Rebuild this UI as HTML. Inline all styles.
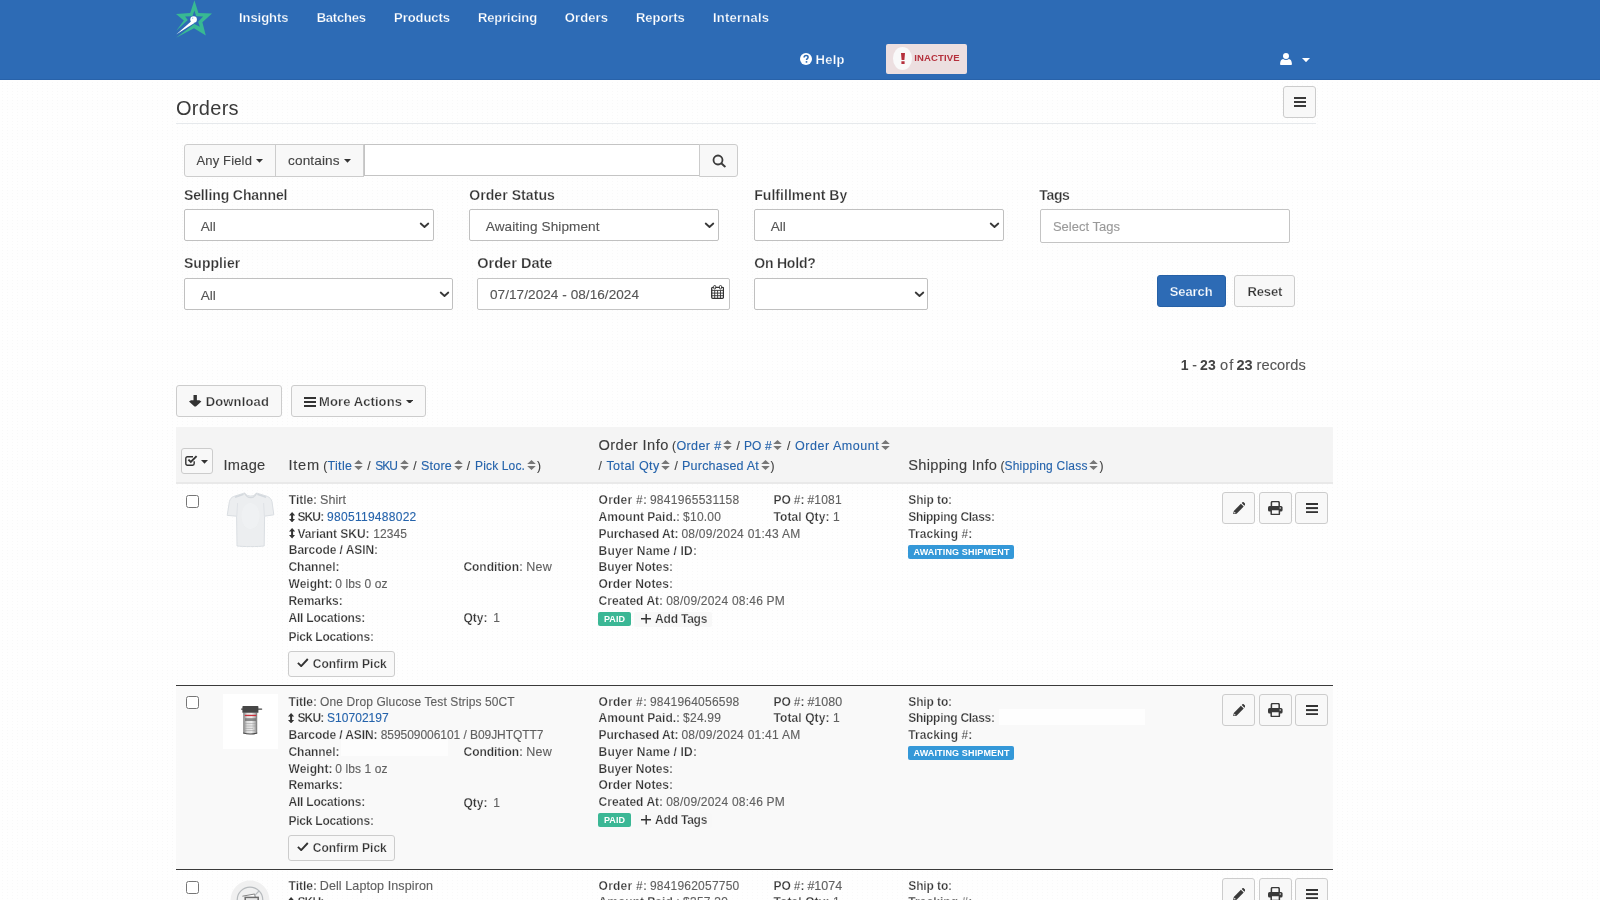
<!DOCTYPE html>
<html lang="en">
<head>
<meta charset="utf-8">
<title>Orders</title>
<style>
html,body{margin:0;padding:0}
body{width:1600px;height:900px;overflow:hidden;position:relative;background:#fefefe radial-gradient(circle,#f8f8f8 0.5px,rgba(248,248,248,0) 0.7px) 0 0/5px 3px;font-family:"Liberation Sans",sans-serif;}
div,span,svg,header,nav,main,section{position:absolute;box-sizing:border-box}
.t{white-space:pre}
.btn{background:#f8f8f8;border:1px solid #ccc;border-radius:3px}
.inp{background:#fff;border:1px solid #c4c4c4;border-radius:2px}
.sel{background:#fff;border:1px solid #c0c0c0;border-radius:2px}
#app{left:0;top:0;width:1600px;height:900px;will-change:transform}

</style>
</head>
<body>
<div id="app">
<header style="left:0;top:0;width:1600px;height:80px;background:#2d6bb5;border-bottom:1px solid #2862a9">
<svg style="left:170px;top:0px;" width="50" height="40" viewBox="0 0 50 40"><path fill="#38b993" d="M24.4 0.3L28.4 12.9L42 13.4L32.4 22.2L35.8 35.4L24 28.2L6.1 37.7L24.2 24.1L29.8 26.7L28.2 21.8L33.1 16.4L26.2 16.2L24.4 10.4L22.4 16.2L15.1 16.4L17.8 20L6.3 30.8L13.8 20.4L6 14L20.2 13.1Z"/><path fill="#fff" d="M6.1 34.6L21.6 21L24.4 23.1Z"/><circle cx="23.6" cy="19.6" r="3.3" fill="#fff"/><circle cx="22.7" cy="18.3" r="0.7" fill="#9cc4e8"/></svg>
<nav style="left:0;top:0">
<span class="t" style="font-size:13px;font-weight:700;color:#fff;letter-spacing:-0.021px;left:238.90px;top:9.00px;line-height:17px;height:17px;-webkit-text-stroke:0.25px #2d6bb5;">Insights</span>
<span class="t" style="font-size:13px;font-weight:700;color:#fff;letter-spacing:-0.230px;left:316.70px;top:9.00px;line-height:17px;height:17px;-webkit-text-stroke:0.25px #2d6bb5;">Batches</span>
<span class="t" style="font-size:13px;font-weight:700;color:#fff;letter-spacing:-0.078px;left:394.10px;top:9.00px;line-height:17px;height:17px;-webkit-text-stroke:0.25px #2d6bb5;">Products</span>
<span class="t" style="font-size:13px;font-weight:700;color:#fff;letter-spacing:-0.096px;left:477.90px;top:9.00px;line-height:17px;height:17px;-webkit-text-stroke:0.25px #2d6bb5;">Repricing</span>
<span class="t" style="font-size:13px;font-weight:700;color:#fff;letter-spacing:0.092px;left:564.80px;top:9.00px;line-height:17px;height:17px;-webkit-text-stroke:0.25px #2d6bb5;">Orders</span>
<span class="t" style="font-size:13px;font-weight:700;color:#fff;letter-spacing:-0.054px;left:636.00px;top:9.00px;line-height:17px;height:17px;-webkit-text-stroke:0.25px #2d6bb5;">Reports</span>
<span class="t" style="font-size:13px;font-weight:700;color:#fff;letter-spacing:0.239px;left:712.90px;top:9.00px;line-height:17px;height:17px;-webkit-text-stroke:0.25px #2d6bb5;">Internals</span>
</nav>
<svg style="left:800px;top:53px;" width="12" height="12" viewBox="0 0 12 12"><circle cx="6" cy="6" r="6" fill="#fff"/><path d="M4.1 4.6C4.1 3.3 5 2.6 6.1 2.6C7.3 2.6 8.1 3.3 8.1 4.3C8.1 5.6 6.5 5.7 6.5 7.1" fill="none" stroke="#2d6bb5" stroke-width="1.5"/><rect x="5.7" y="8.1" width="1.6" height="1.6" fill="#2d6bb5"/></svg>
<span class="t" style="font-size:13px;font-weight:700;color:#fff;letter-spacing:0.276px;left:815.50px;top:51.00px;line-height:17px;height:17px;-webkit-text-stroke:0.25px #2d6bb5;">Help</span>
<div style="left:886px;top:44px;width:81px;height:30px;background:#ecdfe0;border-radius:2px"></div>
<div style="left:893px;top:47px;width:19.4px;height:23px;background:#f9f9f9;border-radius:50%"></div>
<svg style="left:900.6px;top:53px;" width="4" height="11" viewBox="0 0 4 11"><path d="M0 0H4L3.4 7H0.6Z M0.4 8.3H3.6V11H0.4Z" fill="#b5303c"/></svg>
<span class="t" style="font-size:9.5px;font-weight:700;color:#b5303c;letter-spacing:0.151px;left:914.30px;top:51.00px;line-height:13px;height:13px;">INACTIVE</span>
<svg style="left:1279.5px;top:52.8px;" width="12" height="12.4" viewBox="0 0 12 12.4"><circle cx="6" cy="3.1" r="3" fill="#fff"/><path d="M1.6 12.4Q0 12.4 0.1 10.6C0.3 8 1.3 6.3 3.1 6.1C4.6 7.3 7.4 7.3 8.9 6.1C10.7 6.3 11.7 8 11.9 10.6Q12 12.4 10.4 12.4Z" fill="#fff"/></svg>
<svg style="left:1302px;top:58px;" width="8" height="4.2" viewBox="0 0 8 4.2"><path d="M0 0H8L4.0 4.2Z" fill="#fff"/></svg>
</header>
<main style="left:0;top:0">
<span class="t" style="font-size:20px;font-weight:400;color:#3a3a3a;letter-spacing:0.295px;left:176.00px;top:96.00px;line-height:24px;height:24px;">Orders</span>
<div style="left:176px;top:123px;width:1140px;height:1px;background:#e6e9ec"></div>
<div class="btn" style="left:1283px;top:86px;width:33px;height:32px;"></div>
<svg style="left:1294px;top:97px;" width="12" height="10" viewBox="0 0 12 10"><rect x="0" y="0" width="12" height="2" fill="#3a3a3a"/><rect x="0" y="4" width="12" height="2" fill="#3a3a3a"/><rect x="0" y="8" width="12" height="2" fill="#3a3a3a"/></svg>
<section style="left:0;top:0">
<div class="btn" style="left:184px;top:144px;width:92px;height:33px;border-radius:3px 0 0 3px"></div>
<span class="t" style="font-size:13px;font-weight:400;color:#444;letter-spacing:0.150px;left:196.50px;top:152.00px;line-height:17px;height:17px;-webkit-text-stroke:0.12px;">Any Field</span>
<svg style="left:255.6px;top:159.2px;" width="7" height="3.8" viewBox="0 0 7 3.8"><path d="M0 0H7L3.5 3.8Z" fill="#333"/></svg>
<div class="btn" style="left:275px;top:144px;width:89px;height:33px;border-radius:0"></div>
<span class="t" style="font-size:13.58px;font-weight:400;color:#444;letter-spacing:0.143px;left:288.00px;top:152.00px;line-height:17px;height:17px;-webkit-text-stroke:0.12px;">contains</span>
<svg style="left:343.5px;top:159.2px;" width="7" height="3.8" viewBox="0 0 7 3.8"><path d="M0 0H7L3.5 3.8Z" fill="#333"/></svg>
<div class="inp" style="left:364px;top:144px;width:336px;height:32px;border-radius:0"></div>
<div class="btn" style="left:699px;top:144px;width:39px;height:33px;border-radius:0 3px 3px 0"></div>
<svg style="left:711.5px;top:153.8px;" width="14.5" height="14" viewBox="0 0 14.5 14"><circle cx="6" cy="6" r="4.5" fill="none" stroke="#3c3c3c" stroke-width="1.8"/><path d="M9.3 9.3L12.8 12.4" stroke="#3c3c3c" stroke-width="2" stroke-linecap="round"/></svg>
<span class="t" style="font-size:14px;font-weight:700;color:#333;letter-spacing:-0.101px;left:183.90px;top:186.00px;line-height:18px;height:18px;-webkit-text-stroke:0.25px #fefefe;">Selling Channel</span>
<div class="sel" style="left:184px;top:209px;width:250px;height:32px;"></div>
<span class="t" style="font-size:13.58px;font-weight:400;color:#555;letter-spacing:0.000px;left:200.80px;top:218.00px;line-height:17px;height:17px;-webkit-text-stroke:0.12px;">All</span>
<svg style="left:419.3px;top:222.2px;" width="11" height="7" viewBox="0 0 11 7"><path d="M1.7 1.5L5.5 5L9.3 1.5" fill="none" stroke="#383838" stroke-width="1.8" stroke-linecap="round" stroke-linejoin="round"/></svg>
<span class="t" style="font-size:14px;font-weight:700;color:#333;letter-spacing:0.067px;left:469.25px;top:186.00px;line-height:18px;height:18px;-webkit-text-stroke:0.25px #fefefe;">Order Status</span>
<div class="sel" style="left:469px;top:209px;width:250px;height:32px;"></div>
<span class="t" style="font-size:13.58px;font-weight:400;color:#555;letter-spacing:0.099px;left:485.75px;top:218.00px;line-height:17px;height:17px;-webkit-text-stroke:0.12px;">Awaiting Shipment</span>
<svg style="left:704.3px;top:222.2px;" width="11" height="7" viewBox="0 0 11 7"><path d="M1.7 1.5L5.5 5L9.3 1.5" fill="none" stroke="#383838" stroke-width="1.8" stroke-linecap="round" stroke-linejoin="round"/></svg>
<span class="t" style="font-size:14px;font-weight:700;color:#333;letter-spacing:0.037px;left:754.25px;top:186.00px;line-height:18px;height:18px;-webkit-text-stroke:0.25px #fefefe;">Fulfillment By</span>
<div class="sel" style="left:754px;top:209px;width:250px;height:32px;"></div>
<span class="t" style="font-size:13.58px;font-weight:400;color:#555;letter-spacing:0.000px;left:770.80px;top:218.00px;line-height:17px;height:17px;-webkit-text-stroke:0.12px;">All</span>
<svg style="left:989.3px;top:222.2px;" width="11" height="7" viewBox="0 0 11 7"><path d="M1.7 1.5L5.5 5L9.3 1.5" fill="none" stroke="#383838" stroke-width="1.8" stroke-linecap="round" stroke-linejoin="round"/></svg>
<span class="t" style="font-size:14px;font-weight:700;color:#333;letter-spacing:-0.330px;left:1039.25px;top:186.00px;line-height:18px;height:18px;-webkit-text-stroke:0.25px #fefefe;">Tags</span>
<div class="inp" style="left:1040px;top:209px;width:250px;height:34px;"></div>
<span class="t" style="font-size:13px;font-weight:400;color:#9a9a9a;letter-spacing:0.023px;left:1052.90px;top:218.00px;line-height:17px;height:17px;-webkit-text-stroke:0.12px;">Select Tags</span>
<span class="t" style="font-size:14px;font-weight:700;color:#333;letter-spacing:0.048px;left:183.90px;top:254.00px;line-height:18px;height:18px;-webkit-text-stroke:0.25px #fefefe;">Supplier</span>
<div class="sel" style="left:184px;top:278px;width:269px;height:32px;"></div>
<span class="t" style="font-size:13.58px;font-weight:400;color:#555;letter-spacing:0.000px;left:200.80px;top:287.00px;line-height:17px;height:17px;-webkit-text-stroke:0.12px;">All</span>
<svg style="left:438.6px;top:291.2px;" width="11" height="7" viewBox="0 0 11 7"><path d="M1.7 1.5L5.5 5L9.3 1.5" fill="none" stroke="#383838" stroke-width="1.8" stroke-linecap="round" stroke-linejoin="round"/></svg>
<span class="t" style="font-size:14.56px;font-weight:700;color:#333;letter-spacing:0.000px;left:477.25px;top:254.00px;line-height:18px;height:18px;-webkit-text-stroke:0.25px #fefefe;">Order Date</span>
<div class="inp" style="left:477px;top:278px;width:253px;height:32px;"></div>
<span class="t" style="font-size:13.58px;font-weight:400;color:#555;letter-spacing:0.047px;left:490.00px;top:286.00px;line-height:17px;height:17px;-webkit-text-stroke:0.12px;">07/17/2024 - 08/16/2024</span>
<svg style="left:711px;top:285px;" width="13.2" height="14" viewBox="0 0 13.2 14"><rect x="0.7" y="2.3" width="11.8" height="11" rx="1" fill="#fff" stroke="#333" stroke-width="1.3"/><path d="M0.7 5.4H12.5M0.7 8.1H12.5M0.7 10.7H12.5M3.7 5.4V13.3M6.6 5.4V13.3M9.5 5.4V13.3" stroke="#333" stroke-width="0.9"/><rect x="2.7" y="0.4" width="2" height="3.6" rx="1" fill="#fff" stroke="#333" stroke-width="0.9"/><rect x="8.5" y="0.4" width="2" height="3.6" rx="1" fill="#fff" stroke="#333" stroke-width="0.9"/></svg>
<span class="t" style="font-size:14px;font-weight:700;color:#333;letter-spacing:-0.207px;left:754.25px;top:254.00px;line-height:18px;height:18px;-webkit-text-stroke:0.25px #fefefe;">On Hold?</span>
<div class="sel" style="left:754px;top:278px;width:174px;height:32px;"></div>
<svg style="left:913.7px;top:291.2px;" width="11" height="7" viewBox="0 0 11 7"><path d="M1.7 1.5L5.5 5L9.3 1.5" fill="none" stroke="#383838" stroke-width="1.8" stroke-linecap="round" stroke-linejoin="round"/></svg>
<div style="left:1157px;top:275px;width:69px;height:32px;background:#2d6bb5;border:1px solid #2560a6;border-radius:3px"></div>
<span class="t" style="font-size:13px;font-weight:700;color:#fff;letter-spacing:-0.105px;left:1169.75px;top:283.00px;line-height:17px;height:17px;-webkit-text-stroke:0.25px #2d6bb5;">Search</span>
<div class="btn" style="left:1234px;top:275px;width:61px;height:32px;"></div>
<span class="t" style="font-size:13px;font-weight:700;color:#333;letter-spacing:-0.105px;left:1247.40px;top:283.00px;line-height:17px;height:17px;-webkit-text-stroke:0.25px #f8f8f8;">Reset</span>
</section>
<span class="t" style="font-size:14px;font-weight:700;color:#444;letter-spacing:0.000px;left:1180.75px;top:356.00px;line-height:18px;height:18px;">1</span>
<span class="t" style="font-size:14px;font-weight:400;color:#555;letter-spacing:0.000px;left:1192.25px;top:356.00px;line-height:18px;height:18px;-webkit-text-stroke:0.12px;">-</span>
<span class="t" style="font-size:14px;font-weight:700;color:#444;letter-spacing:0.222px;left:1200.10px;top:356.00px;line-height:18px;height:18px;">23</span>
<span class="t" style="font-size:14.63px;font-weight:400;color:#555;letter-spacing:1.087px;left:1220.10px;top:356.00px;line-height:18px;height:18px;-webkit-text-stroke:0.12px;">of</span>
<span class="t" style="font-size:14.56px;font-weight:700;color:#444;letter-spacing:0.000px;left:1236.40px;top:356.00px;line-height:18px;height:18px;">23</span>
<span class="t" style="font-size:14.63px;font-weight:400;color:#555;letter-spacing:0.119px;left:1256.40px;top:356.00px;line-height:18px;height:18px;-webkit-text-stroke:0.12px;">records</span>
<div class="btn" style="left:176px;top:385px;width:106px;height:32px;"></div>
<svg style="left:189.2px;top:395.4px;" width="12.4" height="11.4" viewBox="0 0 12.4 11.4"><path d="M4.5 0H7.9V5.2H10.4L12.4 6.6L6.9 11.4H5.5L0 6.6L2 5.2H4.5Z" fill="#333"/></svg>
<span class="t" style="font-size:13px;font-weight:700;color:#333;letter-spacing:0.156px;left:205.70px;top:393.00px;line-height:17px;height:17px;-webkit-text-stroke:0.25px #f8f8f8;">Download</span>
<div class="btn" style="left:291px;top:385px;width:135px;height:32px;"></div>
<svg style="left:304px;top:396.6px;" width="12" height="10" viewBox="0 0 12 10"><rect x="0" y="0" width="12" height="2" fill="#333"/><rect x="0" y="4" width="12" height="2" fill="#333"/><rect x="0" y="8" width="12" height="2" fill="#333"/></svg>
<span class="t" style="font-size:13px;font-weight:700;color:#333;letter-spacing:0.086px;left:319.10px;top:393.00px;line-height:17px;height:17px;-webkit-text-stroke:0.25px #f8f8f8;">More Actions</span>
<svg style="left:405.7px;top:399.6px;" width="7.3" height="3.8" viewBox="0 0 7.3 3.8"><path d="M0 0H7.3L3.65 3.8Z" fill="#333"/></svg>
<div style="left:0;top:0">
<div style="left:176px;top:427px;width:1157px;height:57px;background:#f4f4f4;border-bottom:2px solid #e9e9e9"></div>
<div style="left:176px;top:685px;width:1157px;height:1px;background:#3a3a3a"></div>
<div style="left:176px;top:686px;width:1157px;height:183px;background:#f9f9f9"></div>
<div style="left:176px;top:869px;width:1157px;height:1px;background:#3a3a3a"></div>
<div class="btn" style="left:181px;top:448px;width:32px;height:26px;"></div>
<svg style="left:185.4px;top:455.2px;" width="12.6" height="11" viewBox="0 0 12.6 11"><path d="M9.2 6.2V8.6A1.6 1.6 0 0 1 7.6 10.2H2.4A1.6 1.6 0 0 1 0.8 8.6V3.4A1.6 1.6 0 0 1 2.4 1.8H8" fill="none" stroke="#333" stroke-width="1.4"/><path d="M3.4 4.6L5.8 7L11.6 1.2" fill="none" stroke="#333" stroke-width="1.9"/></svg>
<svg style="left:201.4px;top:459.8px;" width="7" height="3.8" viewBox="0 0 7 3.8"><path d="M0 0H7L3.5 3.8Z" fill="#333"/></svg>
<span class="t" style="font-size:14.63px;font-weight:400;color:#3d3d3d;letter-spacing:0.257px;left:223.50px;top:456.00px;line-height:18px;height:18px;-webkit-text-stroke:0.12px;">Image</span>
<span class="t" style="font-size:14.63px;font-weight:400;color:#3d3d3d;letter-spacing:0.747px;left:288.50px;top:456.00px;line-height:18px;height:18px;-webkit-text-stroke:0.12px;">Item</span>
<span class="t" style="font-size:12px;font-weight:400;color:#3d3d3d;letter-spacing:0.000px;left:323.25px;top:458.00px;line-height:16px;height:16px;-webkit-text-stroke:0.12px;">(</span>
<span class="t" style="font-size:12.54px;font-weight:400;color:#2563ab;letter-spacing:0.316px;left:327.50px;top:458.00px;line-height:16px;height:16px;-webkit-text-stroke:0.12px;">Title</span>
<svg style="left:353.6px;top:460.2px;" width="9" height="10" viewBox="0 0 9 10"><path d="M4.5 0L8.8 3.9H0.2Z M0.2 6.1H8.8L4.5 10Z" fill="#777"/></svg>
<span class="t" style="font-size:12px;font-weight:400;color:#3d3d3d;letter-spacing:0.000px;left:367.30px;top:458.00px;line-height:16px;height:16px;-webkit-text-stroke:0.12px;">/</span>
<span class="t" style="font-size:12px;font-weight:400;color:#2563ab;letter-spacing:-0.994px;left:375.20px;top:458.00px;line-height:16px;height:16px;-webkit-text-stroke:0.12px;">SKU</span>
<svg style="left:399.8px;top:460.2px;" width="9" height="10" viewBox="0 0 9 10"><path d="M4.5 0L8.8 3.9H0.2Z M0.2 6.1H8.8L4.5 10Z" fill="#777"/></svg>
<span class="t" style="font-size:12px;font-weight:400;color:#3d3d3d;letter-spacing:0.000px;left:413.25px;top:458.00px;line-height:16px;height:16px;-webkit-text-stroke:0.12px;">/</span>
<span class="t" style="font-size:12.54px;font-weight:400;color:#2563ab;letter-spacing:0.168px;left:421.10px;top:458.00px;line-height:16px;height:16px;-webkit-text-stroke:0.12px;">Store</span>
<svg style="left:453.5px;top:460.2px;" width="9" height="10" viewBox="0 0 9 10"><path d="M4.5 0L8.8 3.9H0.2Z M0.2 6.1H8.8L4.5 10Z" fill="#777"/></svg>
<span class="t" style="font-size:12px;font-weight:400;color:#3d3d3d;letter-spacing:0.000px;left:466.70px;top:458.00px;line-height:16px;height:16px;-webkit-text-stroke:0.12px;">/</span>
<span class="t" style="font-size:12px;font-weight:400;color:#2563ab;letter-spacing:0.139px;left:475.10px;top:458.00px;line-height:16px;height:16px;-webkit-text-stroke:0.12px;">Pick Loc.</span>
<svg style="left:527px;top:460.2px;" width="9" height="10" viewBox="0 0 9 10"><path d="M4.5 0L8.8 3.9H0.2Z M0.2 6.1H8.8L4.5 10Z" fill="#777"/></svg>
<span class="t" style="font-size:12px;font-weight:400;color:#3d3d3d;letter-spacing:0.000px;left:537.00px;top:458.00px;line-height:16px;height:16px;-webkit-text-stroke:0.12px;">)</span>
<span class="t" style="font-size:14.63px;font-weight:400;color:#3d3d3d;letter-spacing:0.437px;left:598.50px;top:436.00px;line-height:18px;height:18px;-webkit-text-stroke:0.12px;">Order Info</span>
<span class="t" style="font-size:12px;font-weight:400;color:#3d3d3d;letter-spacing:0.000px;left:672.10px;top:438.00px;line-height:16px;height:16px;-webkit-text-stroke:0.12px;">(</span>
<span class="t" style="font-size:12.54px;font-weight:400;color:#2563ab;letter-spacing:0.397px;left:676.40px;top:438.00px;line-height:16px;height:16px;-webkit-text-stroke:0.12px;">Order #</span>
<svg style="left:722.6px;top:440px;" width="9" height="10" viewBox="0 0 9 10"><path d="M4.5 0L8.8 3.9H0.2Z M0.2 6.1H8.8L4.5 10Z" fill="#777"/></svg>
<span class="t" style="font-size:12px;font-weight:400;color:#3d3d3d;letter-spacing:0.000px;left:736.40px;top:438.00px;line-height:16px;height:16px;-webkit-text-stroke:0.12px;">/</span>
<span class="t" style="font-size:12px;font-weight:400;color:#2563ab;letter-spacing:0.147px;left:743.90px;top:438.00px;line-height:16px;height:16px;-webkit-text-stroke:0.12px;">PO #</span>
<svg style="left:773.2px;top:440px;" width="9" height="10" viewBox="0 0 9 10"><path d="M4.5 0L8.8 3.9H0.2Z M0.2 6.1H8.8L4.5 10Z" fill="#777"/></svg>
<span class="t" style="font-size:12px;font-weight:400;color:#3d3d3d;letter-spacing:0.000px;left:787.00px;top:438.00px;line-height:16px;height:16px;-webkit-text-stroke:0.12px;">/</span>
<span class="t" style="font-size:12.54px;font-weight:400;color:#2563ab;letter-spacing:0.540px;left:794.90px;top:438.00px;line-height:16px;height:16px;-webkit-text-stroke:0.12px;">Order Amount</span>
<svg style="left:880.6px;top:440px;" width="9" height="10" viewBox="0 0 9 10"><path d="M4.5 0L8.8 3.9H0.2Z M0.2 6.1H8.8L4.5 10Z" fill="#777"/></svg>
<span class="t" style="font-size:12px;font-weight:400;color:#3d3d3d;letter-spacing:0.000px;left:598.50px;top:458.00px;line-height:16px;height:16px;-webkit-text-stroke:0.12px;">/</span>
<span class="t" style="font-size:12.54px;font-weight:400;color:#2563ab;letter-spacing:0.426px;left:606.40px;top:458.00px;line-height:16px;height:16px;-webkit-text-stroke:0.12px;">Total Qty</span>
<svg style="left:660.6px;top:460.2px;" width="9" height="10" viewBox="0 0 9 10"><path d="M4.5 0L8.8 3.9H0.2Z M0.2 6.1H8.8L4.5 10Z" fill="#777"/></svg>
<span class="t" style="font-size:12px;font-weight:400;color:#3d3d3d;letter-spacing:0.000px;left:674.50px;top:458.00px;line-height:16px;height:16px;-webkit-text-stroke:0.12px;">/</span>
<span class="t" style="font-size:12.54px;font-weight:400;color:#2563ab;letter-spacing:0.209px;left:682.00px;top:458.00px;line-height:16px;height:16px;-webkit-text-stroke:0.12px;">Purchased At</span>
<svg style="left:760.6px;top:460.2px;" width="9" height="10" viewBox="0 0 9 10"><path d="M4.5 0L8.8 3.9H0.2Z M0.2 6.1H8.8L4.5 10Z" fill="#777"/></svg>
<span class="t" style="font-size:12px;font-weight:400;color:#3d3d3d;letter-spacing:0.000px;left:770.50px;top:458.00px;line-height:16px;height:16px;-webkit-text-stroke:0.12px;">)</span>
<span class="t" style="font-size:14.63px;font-weight:400;color:#3d3d3d;letter-spacing:0.278px;left:908.25px;top:456.00px;line-height:18px;height:18px;-webkit-text-stroke:0.12px;">Shipping Info</span>
<span class="t" style="font-size:12px;font-weight:400;color:#3d3d3d;letter-spacing:0.000px;left:1000.50px;top:458.00px;line-height:16px;height:16px;-webkit-text-stroke:0.12px;">(</span>
<span class="t" style="font-size:12px;font-weight:400;color:#2563ab;letter-spacing:0.219px;left:1004.50px;top:458.00px;line-height:16px;height:16px;-webkit-text-stroke:0.12px;">Shipping Class</span>
<svg style="left:1089.4px;top:460.2px;" width="9" height="10" viewBox="0 0 9 10"><path d="M4.5 0L8.8 3.9H0.2Z M0.2 6.1H8.8L4.5 10Z" fill="#777"/></svg>
<span class="t" style="font-size:12px;font-weight:400;color:#3d3d3d;letter-spacing:0.000px;left:1099.50px;top:458.00px;line-height:16px;height:16px;-webkit-text-stroke:0.12px;">)</span>
<div style="left:186px;top:495px;width:13px;height:13px;background:#fff;border:1px solid #767676;border-radius:2.5px"></div>
<svg style="left:223px;top:492px;" width="55" height="56" viewBox="0 0 55 56"><path d="M21.4 1C23.4 3.4 25.6 4 27.6 4C29.8 4 32 3.4 33.6 1L44.4 4.4C46.8 5.4 48.2 7 49 9.6L50.8 22.8L41.6 24.2L41.2 54C35.8 54.8 19.4 54.8 14 54L13.6 24.2L4.2 23.4L6.4 9.6C7 7 8.4 5.4 10.8 4.4Z" fill="#eceef0" stroke="#dadee2" stroke-width="1"/><path d="M21.4 1C23.4 4.8 25.6 5.6 27.6 5.6C29.8 5.6 32 4.8 33.6 1" fill="none" stroke="#d6dade" stroke-width="1.3"/><path d="M12 5.2L20.6 2.2M43 5.2L34.4 2.2" stroke="#d4d9de" stroke-width="1.6"/><path d="M13.8 24L14.6 11M41.4 24L40.6 11" stroke="#dfe2e6" stroke-width="1"/><ellipse cx="27.5" cy="24" rx="9" ry="13" fill="#f3f4f5" opacity="0.55"/></svg>
<span class="t" style="font-size:12px;font-weight:700;color:#333;letter-spacing:-0.031px;left:288.80px;top:492.00px;line-height:16px;height:16px;-webkit-text-stroke:0.25px #fefefe;">Title:</span>
<span class="t" style="font-size:12.54px;font-weight:400;color:#606060;letter-spacing:0.050px;left:320.00px;top:492.00px;line-height:16px;height:16px;-webkit-text-stroke:0.12px;">Shirt</span>
<svg style="left:288.5px;top:511.6px;" width="6.2" height="10.4" viewBox="0 0 6.2 10.4"><path d="M3.1 0L6.2 3.5H4.1V6.9H6.2L3.1 10.4L0 6.9H2.1V3.5H0Z" fill="#333"/></svg>
<span class="t" style="font-size:12px;font-weight:700;color:#333;letter-spacing:-0.848px;left:297.40px;top:509.00px;line-height:16px;height:16px;-webkit-text-stroke:0.25px #fefefe;">SKU:</span>
<span class="t" style="font-size:12px;font-weight:400;color:#2563ab;letter-spacing:0.277px;left:327.10px;top:509.00px;line-height:16px;height:16px;-webkit-text-stroke:0.12px;">9805119488022</span>
<svg style="left:288.5px;top:528.4px;" width="6.2" height="10.4" viewBox="0 0 6.2 10.4"><path d="M3.1 0L6.2 3.5H4.1V6.9H6.2L3.1 10.4L0 6.9H2.1V3.5H0Z" fill="#333"/></svg>
<span class="t" style="font-size:12px;font-weight:700;color:#333;letter-spacing:-0.053px;left:297.40px;top:526.00px;line-height:16px;height:16px;-webkit-text-stroke:0.25px #fefefe;">Variant SKU:</span>
<span class="t" style="font-size:12px;font-weight:400;color:#606060;letter-spacing:0.106px;left:373.20px;top:526.00px;line-height:16px;height:16px;-webkit-text-stroke:0.12px;">12345</span>
<span class="t" style="font-size:12px;font-weight:700;color:#333;letter-spacing:-0.068px;left:288.80px;top:542.00px;line-height:16px;height:16px;-webkit-text-stroke:0.25px #fefefe;">Barcode / ASIN:</span>
<span class="t" style="font-size:12px;font-weight:700;color:#333;letter-spacing:-0.049px;left:288.50px;top:559.00px;line-height:16px;height:16px;-webkit-text-stroke:0.25px #fefefe;">Channel:</span>
<span class="t" style="font-size:12px;font-weight:700;color:#333;letter-spacing:-0.065px;left:463.50px;top:559.00px;line-height:16px;height:16px;-webkit-text-stroke:0.25px #fefefe;">Condition:</span>
<span class="t" style="font-size:12.54px;font-weight:400;color:#606060;letter-spacing:0.202px;left:526.25px;top:559.00px;line-height:16px;height:16px;-webkit-text-stroke:0.12px;">New</span>
<span class="t" style="font-size:12px;font-weight:700;color:#333;letter-spacing:0.020px;left:288.50px;top:576.00px;line-height:16px;height:16px;-webkit-text-stroke:0.25px #fefefe;">Weight:</span>
<span class="t" style="font-size:12px;font-weight:400;color:#606060;letter-spacing:0.092px;left:335.30px;top:576.00px;line-height:16px;height:16px;-webkit-text-stroke:0.12px;">0 lbs 0 oz</span>
<span class="t" style="font-size:12px;font-weight:700;color:#333;letter-spacing:-0.072px;left:288.50px;top:593.00px;line-height:16px;height:16px;-webkit-text-stroke:0.25px #fefefe;">Remarks:</span>
<span class="t" style="font-size:12px;font-weight:700;color:#333;letter-spacing:-0.203px;left:288.50px;top:610.00px;line-height:16px;height:16px;-webkit-text-stroke:0.25px #fefefe;">All Locations:</span>
<span class="t" style="font-size:12px;font-weight:700;color:#333;letter-spacing:0.000px;left:463.50px;top:610.00px;line-height:16px;height:16px;-webkit-text-stroke:0.25px #fefefe;">Qty:</span>
<span class="t" style="font-size:12px;font-weight:400;color:#606060;letter-spacing:0.000px;left:493.25px;top:610.00px;line-height:16px;height:16px;-webkit-text-stroke:0.12px;">1</span>
<span class="t" style="font-size:12px;font-weight:700;color:#333;letter-spacing:-0.235px;left:288.50px;top:629.00px;line-height:16px;height:16px;-webkit-text-stroke:0.25px #fefefe;">Pick Locations:</span>
<div class="btn" style="left:288px;top:651px;width:107px;height:26px;"></div>
<svg style="left:297.4px;top:658.2px;" width="11.6" height="9.2" viewBox="0 0 11.6 9.2"><path d="M0.9 4.9L4.2 8.1L10.8 1" fill="none" stroke="#333" stroke-width="1.9"/></svg>
<span class="t" style="font-size:12px;font-weight:700;color:#333;letter-spacing:-0.006px;left:312.80px;top:656.00px;line-height:16px;height:16px;-webkit-text-stroke:0.25px #f8f8f8;">Confirm Pick</span>
<span class="t" style="font-size:12px;font-weight:700;color:#333;letter-spacing:0.230px;left:598.60px;top:492.00px;line-height:16px;height:16px;-webkit-text-stroke:0.25px #fefefe;">Order #:</span>
<span class="t" style="font-size:12px;font-weight:400;color:#606060;letter-spacing:0.290px;left:649.90px;top:492.00px;line-height:16px;height:16px;-webkit-text-stroke:0.12px;">9841965531158</span>
<span class="t" style="font-size:12px;font-weight:700;color:#333;letter-spacing:-0.136px;left:773.60px;top:492.00px;line-height:16px;height:16px;-webkit-text-stroke:0.25px #fefefe;">PO #:</span>
<span class="t" style="font-size:12px;font-weight:400;color:#606060;letter-spacing:0.206px;left:807.40px;top:492.00px;line-height:16px;height:16px;-webkit-text-stroke:0.12px;">#1081</span>
<span class="t" style="font-size:12px;font-weight:700;color:#333;letter-spacing:0.014px;left:598.60px;top:509.00px;line-height:16px;height:16px;-webkit-text-stroke:0.25px #fefefe;">Amount Paid.:</span>
<span class="t" style="font-size:12px;font-weight:400;color:#606060;letter-spacing:0.219px;left:683.10px;top:509.00px;line-height:16px;height:16px;-webkit-text-stroke:0.12px;">$10.00</span>
<span class="t" style="font-size:12px;font-weight:700;color:#333;letter-spacing:0.077px;left:773.60px;top:509.00px;line-height:16px;height:16px;-webkit-text-stroke:0.25px #fefefe;">Total Qty:</span>
<span class="t" style="font-size:12px;font-weight:400;color:#606060;letter-spacing:0.000px;left:833.10px;top:509.00px;line-height:16px;height:16px;-webkit-text-stroke:0.12px;">1</span>
<span class="t" style="font-size:12px;font-weight:700;color:#333;letter-spacing:-0.084px;left:598.60px;top:526.00px;line-height:16px;height:16px;-webkit-text-stroke:0.25px #fefefe;">Purchased At:</span>
<span class="t" style="font-size:12px;font-weight:400;color:#606060;letter-spacing:0.261px;left:681.40px;top:526.00px;line-height:16px;height:16px;-webkit-text-stroke:0.12px;">08/09/2024 01:43 AM</span>
<span class="t" style="font-size:12px;font-weight:700;color:#333;letter-spacing:0.151px;left:598.60px;top:543.00px;line-height:16px;height:16px;-webkit-text-stroke:0.25px #fefefe;">Buyer Name / ID:</span>
<span class="t" style="font-size:12px;font-weight:700;color:#333;letter-spacing:-0.017px;left:598.60px;top:559.00px;line-height:16px;height:16px;-webkit-text-stroke:0.25px #fefefe;">Buyer Notes:</span>
<span class="t" style="font-size:12px;font-weight:700;color:#333;letter-spacing:0.104px;left:598.60px;top:576.00px;line-height:16px;height:16px;-webkit-text-stroke:0.25px #fefefe;">Order Notes:</span>
<span class="t" style="font-size:12px;font-weight:700;color:#333;letter-spacing:0.027px;left:598.60px;top:593.00px;line-height:16px;height:16px;-webkit-text-stroke:0.25px #fefefe;">Created At:</span>
<span class="t" style="font-size:12px;font-weight:400;color:#606060;letter-spacing:0.213px;left:666.20px;top:593.00px;line-height:16px;height:16px;-webkit-text-stroke:0.12px;">08/09/2024 08:46 PM</span>
<div style="left:598px;top:612px;width:33px;height:14px;background:#3bb795;border-radius:2px"></div>
<span class="t" style="font-size:9px;font-weight:700;color:#fff;letter-spacing:0.085px;left:603.90px;top:613.00px;line-height:12px;height:12px;">PAID</span>
<div style="left:634px;top:612px;width:78px;height:15px;background:#f8f8f8;border-radius:2px"></div>
<svg style="left:640.6px;top:614.4px;" width="10.4" height="9.6" viewBox="0 0 10.4 9.6"><path d="M5.2 0V9.6M0 4.8H10.4" stroke="#333" stroke-width="1.4"/></svg>
<span class="t" style="font-size:12px;font-weight:700;color:#333;letter-spacing:-0.212px;left:655.10px;top:611.00px;line-height:16px;height:16px;-webkit-text-stroke:0.25px #f8f8f8;">Add Tags</span>
<span class="t" style="font-size:12px;font-weight:700;color:#333;letter-spacing:-0.115px;left:908.25px;top:492.00px;line-height:16px;height:16px;-webkit-text-stroke:0.25px #fefefe;">Ship to:</span>
<span class="t" style="font-size:12px;font-weight:700;color:#333;letter-spacing:-0.281px;left:908.25px;top:509.00px;line-height:16px;height:16px;-webkit-text-stroke:0.25px #fefefe;">Shipping Class:</span>
<span class="t" style="font-size:12px;font-weight:700;color:#333;letter-spacing:0.064px;left:908.25px;top:526.00px;line-height:16px;height:16px;-webkit-text-stroke:0.25px #fefefe;">Tracking #:</span>
<div style="left:908px;top:545px;width:106px;height:14px;background:#3498d8;border-radius:2px"></div>
<span class="t" style="font-size:9px;font-weight:700;color:#fff;letter-spacing:0.149px;left:913.50px;top:546.00px;line-height:12px;height:12px;">AWAITING SHIPMENT</span>
<div class="btn" style="left:1222px;top:492px;width:33px;height:32px;"></div>
<svg style="left:1232.6px;top:502px;" width="12.6" height="12.4" viewBox="0 0 12.6 12.4"><path d="M0.1 12.3L0.8 8.9L7.9 1.8L10.7 4.6L3.6 11.7Z" fill="#3a3a3a"/><path d="M8.7 1L9.7 0.1Q10.2 -0.3 10.7 0.2L12.3 1.8Q12.8 2.3 12.3 2.8L11.4 3.8Z" fill="#3a3a3a"/><path d="M1 11.5L1.4 9.7L2.8 11.1Z" fill="#f8f8f8"/></svg>
<div class="btn" style="left:1259px;top:492px;width:33px;height:32px;"></div>
<svg style="left:1268px;top:500.6px;" width="14.6" height="14.4" viewBox="0 0 14.6 14.4"><path d="M3.4 5V1.6A1.2 1.2 0 0 1 4.6 0.6H10A1.2 1.2 0 0 1 11.2 1.6V5" fill="none" stroke="#3a3a3a" stroke-width="1.5"/><rect x="0" y="5" width="14.6" height="5.6" rx="1.6" fill="#3a3a3a"/><rect x="3.2" y="8.6" width="8.2" height="5" rx="0.8" fill="#f8f8f8" stroke="#3a3a3a" stroke-width="1.5"/><circle cx="12.2" cy="7" r="0.7" fill="#f8f8f8"/></svg>
<div class="btn" style="left:1295px;top:492px;width:33px;height:32px;"></div>
<svg style="left:1306px;top:503px;" width="12" height="10.2" viewBox="0 0 12 10.2"><rect x="0" y="0.0" width="12" height="2" fill="#333"/><rect x="0" y="4.1" width="12" height="2" fill="#333"/><rect x="0" y="8.2" width="12" height="2" fill="#333"/></svg>
<div style="left:186px;top:696px;width:13px;height:13px;background:#fff;border:1px solid #767676;border-radius:2.5px"></div>
<div style="left:223px;top:694px;width:55px;height:55px;background:#fff"></div>
<svg style="left:240px;top:705px;" width="24" height="31" viewBox="0 0 24 31"><defs><linearGradient id="bg" x1="0" x2="1" y1="0" y2="0"><stop offset="0" stop-color="#7d7d7d"/><stop offset="0.28" stop-color="#dedede"/><stop offset="0.6" stop-color="#ececec"/><stop offset="0.85" stop-color="#b5b5b5"/><stop offset="1" stop-color="#6e6e6e"/></linearGradient></defs><path d="M3.2 7.6H17.2V28.6Q10.2 30.6 3.2 28.6Z" fill="url(#bg)"/><path d="M3.2 27.4Q10.2 29.4 17.2 27.4V28.6Q10.2 30.6 3.2 28.6Z" fill="#4a4a4a"/><path d="M3.2 1H17.6Q18.4 1 18.4 1.8V3.4H21.6Q22.3 3.4 22.3 4.1Q22.3 4.8 21.6 4.8H18.4V7.8H2.4V4.8H1.6Q0.9 4.8 0.9 4.1Q0.9 3.4 1.6 3.4H2.4V1.8Q2.4 1 3.2 1Z" fill="#474747"/><rect x="4.8" y="9.8" width="11.6" height="1.3" fill="#c9303b"/><rect x="5" y="13.2" width="11" height="2.8" fill="#6b6b6b" opacity="0.75"/><path d="M5 18.6H16M5 21H16M5 23.4H13M5 25.6H15" stroke="#9a9a9a" stroke-width="0.7" opacity="0.8"/></svg>
<span class="t" style="font-size:12px;font-weight:700;color:#333;letter-spacing:-0.031px;left:288.60px;top:694.00px;line-height:16px;height:16px;-webkit-text-stroke:0.25px #f9f9f9;">Title:</span>
<span class="t" style="font-size:12px;font-weight:400;color:#606060;letter-spacing:0.106px;left:320.10px;top:694.00px;line-height:16px;height:16px;-webkit-text-stroke:0.12px;">One Drop Glucose Test Strips 50CT</span>
<svg style="left:288.4px;top:712.5px;" width="6.2" height="10.4" viewBox="0 0 6.2 10.4"><path d="M3.1 0L6.2 3.5H4.1V6.9H6.2L3.1 10.4L0 6.9H2.1V3.5H0Z" fill="#333"/></svg>
<span class="t" style="font-size:12px;font-weight:700;color:#333;letter-spacing:-0.831px;left:297.40px;top:710.00px;line-height:16px;height:16px;-webkit-text-stroke:0.25px #f9f9f9;">SKU:</span>
<span class="t" style="font-size:12px;font-weight:400;color:#2563ab;letter-spacing:0.024px;left:327.10px;top:710.00px;line-height:16px;height:16px;-webkit-text-stroke:0.12px;">S10702197</span>
<span class="t" style="font-size:12px;font-weight:700;color:#333;letter-spacing:-0.089px;left:288.60px;top:727.00px;line-height:16px;height:16px;-webkit-text-stroke:0.25px #f9f9f9;">Barcode / ASIN:</span>
<span class="t" style="font-size:12px;font-weight:400;color:#606060;letter-spacing:-0.055px;left:380.70px;top:727.00px;line-height:16px;height:16px;-webkit-text-stroke:0.12px;">859509006101 / B09JHTQTT7</span>
<div style="left:341px;top:740px;width:107px;height:16px;background:#fdfdfd"></div>
<span class="t" style="font-size:12px;font-weight:700;color:#333;letter-spacing:-0.049px;left:288.50px;top:744.00px;line-height:16px;height:16px;-webkit-text-stroke:0.25px #f9f9f9;">Channel:</span>
<span class="t" style="font-size:12px;font-weight:700;color:#333;letter-spacing:-0.076px;left:463.60px;top:744.00px;line-height:16px;height:16px;-webkit-text-stroke:0.25px #f9f9f9;">Condition:</span>
<span class="t" style="font-size:12.54px;font-weight:400;color:#606060;letter-spacing:0.202px;left:526.25px;top:744.00px;line-height:16px;height:16px;-webkit-text-stroke:0.12px;">New</span>
<span class="t" style="font-size:12px;font-weight:700;color:#333;letter-spacing:0.020px;left:288.50px;top:761.00px;line-height:16px;height:16px;-webkit-text-stroke:0.25px #f9f9f9;">Weight:</span>
<span class="t" style="font-size:12px;font-weight:400;color:#606060;letter-spacing:0.092px;left:335.30px;top:761.00px;line-height:16px;height:16px;-webkit-text-stroke:0.12px;">0 lbs 1 oz</span>
<span class="t" style="font-size:12px;font-weight:700;color:#333;letter-spacing:-0.072px;left:288.50px;top:777.00px;line-height:16px;height:16px;-webkit-text-stroke:0.25px #f9f9f9;">Remarks:</span>
<span class="t" style="font-size:12px;font-weight:700;color:#333;letter-spacing:-0.203px;left:288.50px;top:794.00px;line-height:16px;height:16px;-webkit-text-stroke:0.25px #f9f9f9;">All Locations:</span>
<span class="t" style="font-size:12px;font-weight:700;color:#333;letter-spacing:0.000px;left:463.50px;top:795.00px;line-height:16px;height:16px;-webkit-text-stroke:0.25px #f9f9f9;">Qty:</span>
<span class="t" style="font-size:12px;font-weight:400;color:#606060;letter-spacing:0.000px;left:493.25px;top:795.00px;line-height:16px;height:16px;-webkit-text-stroke:0.12px;">1</span>
<span class="t" style="font-size:12px;font-weight:700;color:#333;letter-spacing:-0.235px;left:288.50px;top:813.00px;line-height:16px;height:16px;-webkit-text-stroke:0.25px #f9f9f9;">Pick Locations:</span>
<div class="btn" style="left:288px;top:835px;width:107px;height:26px;"></div>
<svg style="left:297.4px;top:842.2px;" width="11.6" height="9.2" viewBox="0 0 11.6 9.2"><path d="M0.9 4.9L4.2 8.1L10.8 1" fill="none" stroke="#333" stroke-width="1.9"/></svg>
<span class="t" style="font-size:12px;font-weight:700;color:#333;letter-spacing:-0.006px;left:312.80px;top:840.00px;line-height:16px;height:16px;-webkit-text-stroke:0.25px #f8f8f8;">Confirm Pick</span>
<span class="t" style="font-size:12px;font-weight:700;color:#333;letter-spacing:0.230px;left:598.60px;top:694.00px;line-height:16px;height:16px;-webkit-text-stroke:0.25px #f9f9f9;">Order #:</span>
<span class="t" style="font-size:12px;font-weight:400;color:#606060;letter-spacing:0.215px;left:649.90px;top:694.00px;line-height:16px;height:16px;-webkit-text-stroke:0.12px;">9841964056598</span>
<span class="t" style="font-size:12px;font-weight:700;color:#333;letter-spacing:-0.136px;left:773.60px;top:694.00px;line-height:16px;height:16px;-webkit-text-stroke:0.25px #f9f9f9;">PO #:</span>
<span class="t" style="font-size:12.48px;font-weight:400;color:#606060;letter-spacing:0.000px;left:807.40px;top:694.00px;line-height:16px;height:16px;-webkit-text-stroke:0.12px;">#1080</span>
<span class="t" style="font-size:12px;font-weight:700;color:#333;letter-spacing:0.014px;left:598.60px;top:710.00px;line-height:16px;height:16px;-webkit-text-stroke:0.25px #f9f9f9;">Amount Paid.:</span>
<span class="t" style="font-size:12px;font-weight:400;color:#606060;letter-spacing:0.219px;left:683.10px;top:710.00px;line-height:16px;height:16px;-webkit-text-stroke:0.12px;">$24.99</span>
<span class="t" style="font-size:12px;font-weight:700;color:#333;letter-spacing:0.077px;left:773.60px;top:710.00px;line-height:16px;height:16px;-webkit-text-stroke:0.25px #f9f9f9;">Total Qty:</span>
<span class="t" style="font-size:12px;font-weight:400;color:#606060;letter-spacing:0.000px;left:833.10px;top:710.00px;line-height:16px;height:16px;-webkit-text-stroke:0.12px;">1</span>
<span class="t" style="font-size:12px;font-weight:700;color:#333;letter-spacing:-0.084px;left:598.60px;top:727.00px;line-height:16px;height:16px;-webkit-text-stroke:0.25px #f9f9f9;">Purchased At:</span>
<span class="t" style="font-size:12px;font-weight:400;color:#606060;letter-spacing:0.261px;left:681.40px;top:727.00px;line-height:16px;height:16px;-webkit-text-stroke:0.12px;">08/09/2024 01:41 AM</span>
<span class="t" style="font-size:12px;font-weight:700;color:#333;letter-spacing:0.151px;left:598.60px;top:744.00px;line-height:16px;height:16px;-webkit-text-stroke:0.25px #f9f9f9;">Buyer Name / ID:</span>
<span class="t" style="font-size:12px;font-weight:700;color:#333;letter-spacing:-0.017px;left:598.60px;top:761.00px;line-height:16px;height:16px;-webkit-text-stroke:0.25px #f9f9f9;">Buyer Notes:</span>
<span class="t" style="font-size:12px;font-weight:700;color:#333;letter-spacing:0.104px;left:598.60px;top:777.00px;line-height:16px;height:16px;-webkit-text-stroke:0.25px #f9f9f9;">Order Notes:</span>
<span class="t" style="font-size:12px;font-weight:700;color:#333;letter-spacing:0.027px;left:598.60px;top:794.00px;line-height:16px;height:16px;-webkit-text-stroke:0.25px #f9f9f9;">Created At:</span>
<span class="t" style="font-size:12px;font-weight:400;color:#606060;letter-spacing:0.213px;left:666.20px;top:794.00px;line-height:16px;height:16px;-webkit-text-stroke:0.12px;">08/09/2024 08:46 PM</span>
<div style="left:598px;top:813px;width:33px;height:14px;background:#3bb795;border-radius:2px"></div>
<span class="t" style="font-size:9px;font-weight:700;color:#fff;letter-spacing:0.085px;left:603.90px;top:814.00px;line-height:12px;height:12px;">PAID</span>
<div style="left:634px;top:813px;width:78px;height:15px;background:#f8f8f8;border-radius:2px"></div>
<svg style="left:640.6px;top:815.4px;" width="10.4" height="9.6" viewBox="0 0 10.4 9.6"><path d="M5.2 0V9.6M0 4.8H10.4" stroke="#333" stroke-width="1.4"/></svg>
<span class="t" style="font-size:12px;font-weight:700;color:#333;letter-spacing:-0.212px;left:655.10px;top:812.00px;line-height:16px;height:16px;-webkit-text-stroke:0.25px #f8f8f8;">Add Tags</span>
<span class="t" style="font-size:12px;font-weight:700;color:#333;letter-spacing:-0.115px;left:908.25px;top:694.00px;line-height:16px;height:16px;-webkit-text-stroke:0.25px #f9f9f9;">Ship to:</span>
<span class="t" style="font-size:12px;font-weight:700;color:#333;letter-spacing:-0.281px;left:908.25px;top:710.00px;line-height:16px;height:16px;-webkit-text-stroke:0.25px #f9f9f9;">Shipping Class:</span>
<div style="left:999px;top:709px;width:146px;height:16px;background:#fefefe"></div>
<span class="t" style="font-size:12px;font-weight:700;color:#333;letter-spacing:0.064px;left:908.25px;top:727.00px;line-height:16px;height:16px;-webkit-text-stroke:0.25px #f9f9f9;">Tracking #:</span>
<div style="left:908px;top:746px;width:106px;height:14px;background:#3498d8;border-radius:2px"></div>
<span class="t" style="font-size:9px;font-weight:700;color:#fff;letter-spacing:0.149px;left:913.50px;top:747.00px;line-height:12px;height:12px;">AWAITING SHIPMENT</span>
<div class="btn" style="left:1222px;top:694px;width:33px;height:32px;"></div>
<svg style="left:1232.6px;top:704px;" width="12.6" height="12.4" viewBox="0 0 12.6 12.4"><path d="M0.1 12.3L0.8 8.9L7.9 1.8L10.7 4.6L3.6 11.7Z" fill="#3a3a3a"/><path d="M8.7 1L9.7 0.1Q10.2 -0.3 10.7 0.2L12.3 1.8Q12.8 2.3 12.3 2.8L11.4 3.8Z" fill="#3a3a3a"/><path d="M1 11.5L1.4 9.7L2.8 11.1Z" fill="#f8f8f8"/></svg>
<div class="btn" style="left:1259px;top:694px;width:33px;height:32px;"></div>
<svg style="left:1268px;top:702.6px;" width="14.6" height="14.4" viewBox="0 0 14.6 14.4"><path d="M3.4 5V1.6A1.2 1.2 0 0 1 4.6 0.6H10A1.2 1.2 0 0 1 11.2 1.6V5" fill="none" stroke="#3a3a3a" stroke-width="1.5"/><rect x="0" y="5" width="14.6" height="5.6" rx="1.6" fill="#3a3a3a"/><rect x="3.2" y="8.6" width="8.2" height="5" rx="0.8" fill="#f8f8f8" stroke="#3a3a3a" stroke-width="1.5"/><circle cx="12.2" cy="7" r="0.7" fill="#f8f8f8"/></svg>
<div class="btn" style="left:1295px;top:694px;width:33px;height:32px;"></div>
<svg style="left:1306px;top:705px;" width="12" height="10.2" viewBox="0 0 12 10.2"><rect x="0" y="0.0" width="12" height="2" fill="#333"/><rect x="0" y="4.1" width="12" height="2" fill="#333"/><rect x="0" y="8.2" width="12" height="2" fill="#333"/></svg>
<div style="left:186px;top:881px;width:13px;height:13px;background:#fff;border:1px solid #767676;border-radius:2.5px"></div>
<svg style="left:228px;top:878px;" width="44" height="44" viewBox="0 0 44 44"><circle cx="22" cy="22" r="19.4" fill="#f0f0f0"/><circle cx="22" cy="22" r="12.8" fill="none" stroke="#b6babd" stroke-width="1.2"/><path d="M14.4 18.2L26.6 16L27.2 19" fill="#fff" stroke="#777" stroke-width="0.9"/><rect x="17.2" y="19.4" width="13" height="9" fill="#e8e8e8" stroke="#6c6c6c" stroke-width="1.5"/><path d="M26.8 17.4L31 13" stroke="#b6babd" stroke-width="1.2"/></svg>
<span class="t" style="font-size:12px;font-weight:700;color:#333;letter-spacing:-0.031px;left:288.60px;top:878.00px;line-height:16px;height:16px;-webkit-text-stroke:0.25px #fefefe;">Title:</span>
<span class="t" style="font-size:12.54px;font-weight:400;color:#606060;letter-spacing:0.088px;left:319.80px;top:878.00px;line-height:16px;height:16px;-webkit-text-stroke:0.12px;">Dell Laptop Inspiron</span>
<svg style="left:288.4px;top:897.2px;" width="6.2" height="10.4" viewBox="0 0 6.2 10.4"><path d="M3.1 0L6.2 3.5H4.1V6.9H6.2L3.1 10.4L0 6.9H2.1V3.5H0Z" fill="#333"/></svg>
<span class="t" style="font-size:12px;font-weight:700;color:#333;letter-spacing:-0.831px;left:297.40px;top:894.00px;line-height:16px;height:16px;-webkit-text-stroke:0.25px #fefefe;">SKU:</span>
<span class="t" style="font-size:12px;font-weight:700;color:#333;letter-spacing:0.230px;left:598.60px;top:878.00px;line-height:16px;height:16px;-webkit-text-stroke:0.25px #fefefe;">Order #:</span>
<span class="t" style="font-size:12px;font-weight:400;color:#606060;letter-spacing:0.215px;left:649.90px;top:878.00px;line-height:16px;height:16px;-webkit-text-stroke:0.12px;">9841962057750</span>
<span class="t" style="font-size:12px;font-weight:700;color:#333;letter-spacing:-0.136px;left:773.60px;top:878.00px;line-height:16px;height:16px;-webkit-text-stroke:0.25px #fefefe;">PO #:</span>
<span class="t" style="font-size:12.48px;font-weight:400;color:#606060;letter-spacing:0.000px;left:807.40px;top:878.00px;line-height:16px;height:16px;-webkit-text-stroke:0.12px;">#1074</span>
<span class="t" style="font-size:12px;font-weight:700;color:#333;letter-spacing:0.014px;left:598.60px;top:894.00px;line-height:16px;height:16px;-webkit-text-stroke:0.25px #fefefe;">Amount Paid.:</span>
<span class="t" style="font-size:12px;font-weight:400;color:#606060;letter-spacing:0.235px;left:683.10px;top:894.00px;line-height:16px;height:16px;-webkit-text-stroke:0.12px;">$357.39</span>
<span class="t" style="font-size:12px;font-weight:700;color:#333;letter-spacing:0.077px;left:773.60px;top:894.00px;line-height:16px;height:16px;-webkit-text-stroke:0.25px #fefefe;">Total Qty:</span>
<span class="t" style="font-size:12px;font-weight:400;color:#606060;letter-spacing:0.000px;left:833.10px;top:894.00px;line-height:16px;height:16px;-webkit-text-stroke:0.12px;">1</span>
<span class="t" style="font-size:12px;font-weight:700;color:#333;letter-spacing:-0.115px;left:908.25px;top:878.00px;line-height:16px;height:16px;-webkit-text-stroke:0.25px #fefefe;">Ship to:</span>
<span class="t" style="font-size:12px;font-weight:700;color:#333;letter-spacing:0.064px;left:908.25px;top:894.00px;line-height:16px;height:16px;-webkit-text-stroke:0.25px #fefefe;">Tracking #:</span>
<div class="btn" style="left:1222px;top:878px;width:33px;height:32px;"></div>
<svg style="left:1232.6px;top:888px;" width="12.6" height="12.4" viewBox="0 0 12.6 12.4"><path d="M0.1 12.3L0.8 8.9L7.9 1.8L10.7 4.6L3.6 11.7Z" fill="#3a3a3a"/><path d="M8.7 1L9.7 0.1Q10.2 -0.3 10.7 0.2L12.3 1.8Q12.8 2.3 12.3 2.8L11.4 3.8Z" fill="#3a3a3a"/><path d="M1 11.5L1.4 9.7L2.8 11.1Z" fill="#f8f8f8"/></svg>
<div class="btn" style="left:1259px;top:878px;width:33px;height:32px;"></div>
<svg style="left:1268px;top:886.6px;" width="14.6" height="14.4" viewBox="0 0 14.6 14.4"><path d="M3.4 5V1.6A1.2 1.2 0 0 1 4.6 0.6H10A1.2 1.2 0 0 1 11.2 1.6V5" fill="none" stroke="#3a3a3a" stroke-width="1.5"/><rect x="0" y="5" width="14.6" height="5.6" rx="1.6" fill="#3a3a3a"/><rect x="3.2" y="8.6" width="8.2" height="5" rx="0.8" fill="#f8f8f8" stroke="#3a3a3a" stroke-width="1.5"/><circle cx="12.2" cy="7" r="0.7" fill="#f8f8f8"/></svg>
<div class="btn" style="left:1295px;top:878px;width:33px;height:32px;"></div>
<svg style="left:1306px;top:889px;" width="12" height="10.2" viewBox="0 0 12 10.2"><rect x="0" y="0.0" width="12" height="2" fill="#333"/><rect x="0" y="4.1" width="12" height="2" fill="#333"/><rect x="0" y="8.2" width="12" height="2" fill="#333"/></svg>
</div>
</main>
</div>
</body>
</html>
